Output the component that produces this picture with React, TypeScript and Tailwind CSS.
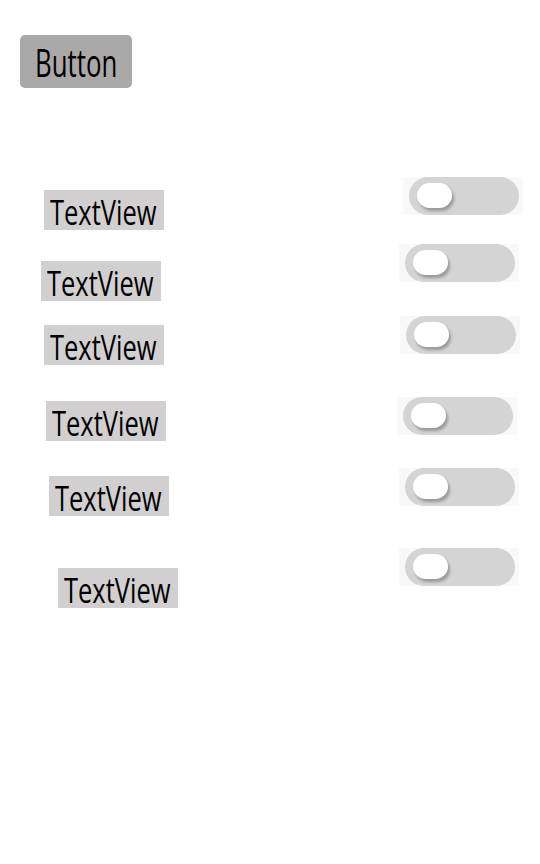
import React from "react"

interface Row {
  rowClass: string
  textClass: string
  switchClass: string
}

// each row: textview on the left, off switch on the right
const rows: Row[] = [
  { rowClass: "mt-[89px] h-[53px]", textClass: "ml-[44px] mt-[13px]", switchClass: "ml-[239px] mt-0" },
  { rowClass: "mt-[14px] h-[57px]", textClass: "ml-[41px] mt-[17px]", switchClass: "ml-[238px] mt-0" },
  { rowClass: "mt-[15px] h-[49px]", textClass: "ml-[44px] mt-[9px]", switchClass: "ml-[236px] mt-0" },
  { rowClass: "mt-[32px] h-[44px]", textClass: "ml-[46px] mt-[4px]", switchClass: "ml-[231px] mt-0" },
  { rowClass: "mt-[27px] h-[49px]", textClass: "ml-[49px] mt-[8px]", switchClass: "ml-[230px] mt-0" },
  { rowClass: "mt-[31px] h-[60px]", textClass: "ml-[58px] mt-[20px]", switchClass: "ml-[221px] mt-0" },
]

function TextView({ className }: { className: string }) {
  return (
    <div className={`${className} h-[40px] w-[120px] shrink-0 bg-[#d1cfcf] pl-[6px] text-[34px] leading-[44px] text-black`}>
      <span className="inline-block origin-left scale-x-[0.75] whitespace-nowrap">TextView</span>
    </div>
  )
}

function OffSwitch({ className }: { className: string }) {
  return (
    <div className={`${className} flex h-[38px] w-[120px] shrink-0 bg-[#f8f8f8] pl-[6px] pr-[4px]`}>
      <div className="flex h-full w-full items-start rounded-full bg-[#d4d4d4] pl-[8px] pt-[6px]">
        <div className="h-[25px] w-[35px] rounded-full bg-white shadow-[2px_3px_3px_rgba(0,0,0,0.28)]" />
      </div>
    </div>
  )
}

export default function App() {
  return (
    <div className="min-h-[864px] w-[540px] bg-white font-['Open_Sans',sans-serif]">
      <div className="pt-[35px] pl-[20px]">
        <button className="h-[53px] w-[112px] overflow-hidden rounded-[5px] bg-[#aba8a8] text-left pl-[15px] text-[38px] leading-[54px] text-black">
          <span className="inline-block origin-left scale-x-[0.68] whitespace-nowrap">Button</span>
        </button>
      </div>

      {rows.map((row, i) => (
        <div key={i} className={`${row.rowClass} flex items-start`}>
          <TextView className={row.textClass} />
          <OffSwitch className={row.switchClass} />
        </div>
      ))}
    </div>
  )
}
